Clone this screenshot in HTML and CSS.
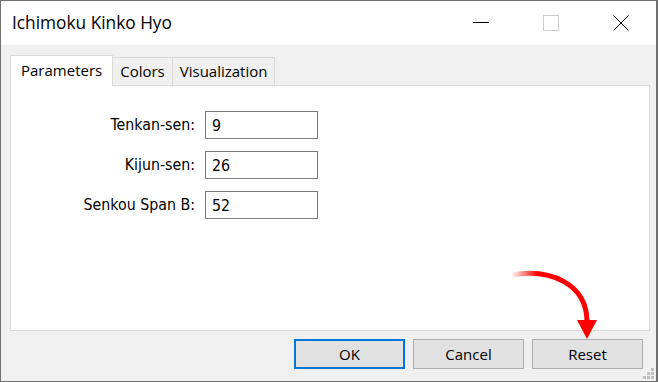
FILE: index.html
```html
<!DOCTYPE html>
<html lang="en">

<head>
    <meta charset="UTF-8">
    <title>Ichimoku Kinko Hyo</title>
    <link rel="stylesheet" href="styles.css">
</head>

<body>

    <div class="window">
        <header class="titlebar">
            <span class="title">Ichimoku Kinko Hyo</span>
            <div class="caption-btns">
                <span class="cap-btn"><svg width="16" height="16" viewBox="0 0 16 16"><line x1="0" y1="7.5" x2="16" y2="7.5" stroke="#000" stroke-width="1"/></svg></span>
                <span class="cap-btn"><svg width="16" height="16" viewBox="0 0 16 16"><rect x="0.5" y="0.5" width="15" height="15" fill="none" stroke="#cccccc" stroke-width="1"/></svg></span>
                <span class="cap-btn"><svg width="16" height="16" viewBox="0 0 16 16"><path d="M0.5 0.5 L15.5 15.5 M15.5 0.5 L0.5 15.5" stroke="#000" stroke-width="1"/></svg></span>
            </div>
        </header>

        <div class="dialog-body">
            <div class="tabs">
                <span class="tab active">Parameters</span>
                <span class="tab">Colors</span>
                <span class="tab">Visualization</span>
            </div>

            <section class="panel">
                <div class="form-grid">
                    <label>Tenkan-sen:</label>
                    <input type="text" value="9">
                    <label>Kijun-sen:</label>
                    <input type="text" value="26">
                    <label>Senkou Span B:</label>
                    <input type="text" value="52">
                </div>
            </section>

            <div class="btn-row">
                <button class="btn default">OK</button>
                <button class="btn">Cancel</button>
                <button class="btn">Reset</button>
            </div>
        </div>

        <!-- hint arrow pointing at Reset -->
        <svg class="hint-arrow" width="110" height="80" viewBox="0 0 110 80">
            <defs>
                <linearGradient id="fade" x1="0" y1="0" x2="1" y2="0">
                    <stop offset="0" stop-color="#ff0000" stop-opacity="0"/>
                    <stop offset="0.35" stop-color="#ff0000" stop-opacity="1"/>
                </linearGradient>
            </defs>
            <path d="M0 11 C40 4 76 20 76 58" fill="none" stroke="url(#fade)" stroke-width="5"/>
            <path d="M66 56 L86 56 L76 75 Z" fill="#ff0000"/>
        </svg>

        <div class="grip">
            <i></i><i></i><i></i>
        </div>
    </div>

</body>

</html>
```

FILE: styles.css
```css
body {
    margin: 0;
    font-family: 'Open Sans', sans-serif;
    color: #000;
}

.window {
    position: relative;
    width: 658px;
    height: 382px;
    box-sizing: border-box;
    border: 1px solid #707070;
    border-right-width: 2px;
    background-color: #f0f0f0;
    display: flex;
    flex-direction: column;
}

.titlebar {
    height: 44px;
    background-color: #fff;
    display: flex;
    align-items: center;
    justify-content: space-between;
}

.title {
    padding-left: 11px;
    font-size: 17.3px;
    padding-bottom: 1px;
}

.caption-btns {
    display: flex;
    height: 100%;
}

.cap-btn {
    width: 70px;
    display: flex;
    align-items: center;
    justify-content: center;
}

.cap-btn svg {
    display: block;
}

.dialog-body {
    padding: 10px 6px 0 9px;
}

.tabs {
    display: flex;
    align-items: flex-end;
    height: 30px;
    position: relative;
    z-index: 1;
}

.tab {
    height: 28px;
    box-sizing: border-box;
    padding: 0 7px;
    border: 1px solid #d9d9d9;
    border-left: none;
    border-bottom: none;
    background-color: #f0f0f0;
    font-size: 15px;
    line-height: 27px;
}

.tab.active {
    height: 31px;
    margin-bottom: -1px;
    padding: 0 10px;
    border-left: 1px solid #d9d9d9;
    background-color: #fff;
    line-height: 29px;
}

.panel {
    height: 246px;
    box-sizing: border-box;
    border: 1px solid #d9d9d9;
    background-color: #fff;
    padding-top: 25px;
}

.form-grid {
    display: grid;
    grid-template-columns: 184px 113px;
    column-gap: 10px;
    row-gap: 12px;
}

.form-grid label {
    text-align: right;
    font-family: 'DejaVu Sans Condensed', 'DejaVu Sans', sans-serif;
    font-size: 15.8px;
    line-height: 28px;
}

.form-grid input {
    height: 28px;
    box-sizing: border-box;
    margin: 0;
    border: 1px solid #7a7a7a;
    padding: 0 6px;
    font-family: 'DejaVu Sans Condensed', 'DejaVu Sans', sans-serif;
    font-size: 15.8px;
    color: #000;
    outline: none;
}

.btn-row {
    display: flex;
    justify-content: flex-end;
    gap: 8px;
    margin-top: 8px;
    padding-right: 7px;
}

.btn {
    width: 111px;
    height: 30px;
    box-sizing: border-box;
    margin: 0;
    border: 1px solid #adadad;
    background-color: #e1e1e1;
    font-family: 'Open Sans', sans-serif;
    font-size: 15px;
    color: #000;
    padding: 0;
}

.btn.default {
    border: 2px solid #0078d7;
}

.hint-arrow {
    position: absolute;
    left: 510px;
    top: 263px;
}

.grip {
    position: absolute;
    right: 2px;
    bottom: 2px;
    width: 12px;
    height: 12px;
}

.grip i {
    position: absolute;
    width: 3px;
    height: 3px;
    background-color: #c0c0c0;
    right: 0;
    bottom: 0;
    box-shadow: -4px 0 0 #c0c0c0, -8px 0 0 #c0c0c0, 0 -4px 0 #c0c0c0, -4px -4px 0 #c0c0c0, 0 -8px 0 #c0c0c0;
}
```
